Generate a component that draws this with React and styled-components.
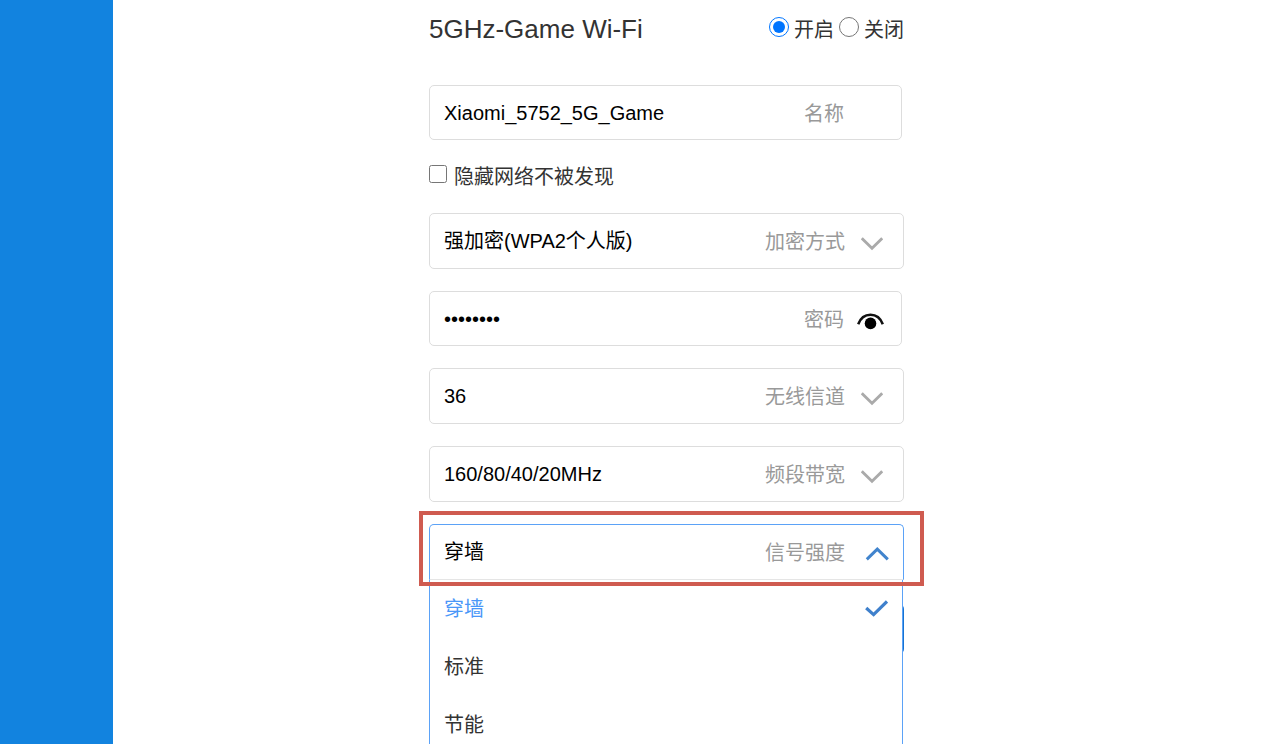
import React, { useState } from "react";
import styled, { createGlobalStyle } from "styled-components";

const GlobalStyle = createGlobalStyle`
  * { box-sizing: border-box; }
  body {
    margin: 0;
    background: #fff;
    color: #333;
    font-family: "Liberation Sans", "Noto Sans CJK SC", sans-serif;
    font-size: 20px;
    line-height: 30px;
  }
  input, select, button { font: inherit; color: inherit; }
`;

const Shell = styled.div`
  display: flex;
  height: 100vh;
`;

const SideBar = styled.aside`
  flex: 0 0 113px;
  background: #1283df;
`;

const Main = styled.main`
  flex: 1;
  min-width: 0;
  overflow-y: auto;
  scrollbar-width: none;
  padding: 14px 24px 130px 316px;
`;

const Form = styled.form`
  display: flex;
  flex-direction: column;
  max-width: 475px;
`;

const Header = styled.div`
  display: flex;
  justify-content: space-between;
  align-items: flex-start;
  margin-bottom: 39px;
`;

const Title = styled.h1`
  margin: 0;
  font-size: 26px;
  font-weight: 400;
  line-height: 30px;
`;

const RadioGroup = styled.div`
  display: flex;
  gap: 5px;
`;

const Choice = styled.label`
  display: flex;
  align-items: flex-start;
  gap: ${(p) => (p.$wide ? 7 : 5)}px;
  line-height: 32px;
`;

const Radio = styled.input`
  width: 20px;
  height: 20px;
  margin: 3px 0 0;
`;

const CheckBox = styled.input`
  width: 18px;
  height: 18px;
  margin: 4px 0 0;
`;

const Fields = styled.div`
  display: flex;
  flex-direction: column;
  gap: 22px;
`;

const HideRow = styled.div`
  margin: -1px 0 -2px;
`;

const Box = styled.div`
  display: flex;
  align-items: center;
  height: ${(p) => (p.$text ? 55 : 56)}px;
  margin-right: ${(p) => (p.$text ? 2 : 0)}px;
  padding: 0 ${(p) => (p.$open ? 14 : p.$text ? 17 : 20)}px 0 14px;
  border: 1px solid ${(p) => (p.$open ? "#5ba2f7" : "#ddd")};
  border-bottom-color: ${(p) => (p.$open ? "#e5e5e5" : "#ddd")};
  border-radius: ${(p) => (p.$open ? "5px 5px 0 0" : "5px")};
  background: #fff;
`;

const TextInput = styled.input`
  flex: 1;
  min-width: 0;
  height: 30px;
  padding: 0;
  border: 0;
  outline: 0;
  background: none;
  color: #000;
`;

const Select = styled.select`
  flex: 1;
  min-width: 0;
  height: 30px;
  padding: 0;
  border: 0;
  outline: 0;
  appearance: none;
  background: none;
  color: #000;
`;

const FieldLabel = styled.label`
  padding-top: 2px;
  color: #999;
`;

const IconSlot = styled.span`
  display: flex;
  justify-content: flex-end;
  width: ${(p) => (p.$open ? 44 : p.$text ? 40 : 38)}px;
  padding-top: ${(p) => (p.$open ? 4 : 6)}px;
`;

const EyeButton = styled.button`
  display: flex;
  padding: 0;
  border: 0;
  background: none;
`;

const SelectArea = styled.div`
  position: relative;
`;

const Menu = styled.ul`
  position: absolute;
  z-index: 1;
  top: 100%;
  left: 0;
  right: 1px;
  margin: 0;
  padding: 0;
  list-style: none;
  background: #fff;
  border: 1px solid #5ba2f7;
  border-top: 0;
`;

const MenuItem = styled.button`
  display: flex;
  align-items: center;
  justify-content: space-between;
  width: 100%;
  height: 58px;
  padding: 0 14px;
  border: 0;
  background: none;
  text-align: left;
  color: ${(p) => (p.$active ? "#4a97f8" : "#333")};
`;

const Highlight = styled.div`
  position: absolute;
  z-index: 2;
  top: -13px;
  left: -10px;
  right: -20px;
  height: 75px;
  border: 4px solid #cf5b50;
  pointer-events: none;
`;

const SubmitButton = styled.button`
  height: 50px;
  margin-top: 24px;
  border: 0;
  border-radius: 5px;
  background: #1673d2;
`;

const ChevronDown = () => (
  <svg width="22" height="14" viewBox="0 0 22 14" fill="none" stroke="#aaa" strokeWidth="2.8">
    <path d="M.8 1.3 11 11.2 21.2 1.3" />
  </svg>
);

const ChevronUp = () => (
  <svg width="24" height="14" viewBox="0 0 24 14" fill="none" stroke="#4184cd" strokeWidth="3">
    <path d="M1.8 12.3 12.3 2.1 22.8 12.3" />
  </svg>
);

const Check = () => (
  <svg width="24" height="18" viewBox="0 0 24 18" fill="none" stroke="#3f80cc" strokeWidth="3.2">
    <path d="M2.2 8 9.6 14.6 23 1.4" />
  </svg>
);

const Eye = () => (
  <svg width="27" height="17" viewBox="0 0 27 17">
    <path d="M1.2 11.2C3.5 5 8 1.7 13.5 1.7S23.5 5 25.8 11.2" fill="none" stroke="#111" strokeWidth="2.6" />
    <circle cx="13.5" cy="10.4" r="5.8" fill="#000" />
  </svg>
);

function SelectField({ id, label, options }) {
  return (
    <Box>
      <Select id={id} defaultValue={options[0]}>
        {options.map((o) => (
          <option key={o}>{o}</option>
        ))}
      </Select>
      <FieldLabel htmlFor={id}>{label}</FieldLabel>
      <IconSlot>
        <ChevronDown />
      </IconSlot>
    </Box>
  );
}

const strengths = ["穿墙", "标准", "节能"];

export default function App() {
  const [strength, setStrength] = useState("穿墙");
  const [open, setOpen] = useState(true);
  const [shown, setShown] = useState(false);

  return (
    <>
      <GlobalStyle />
      <Shell>
        <SideBar />
        <Main>
          <Form onSubmit={(e) => e.preventDefault()}>
            <Header>
              <Title>5GHz-Game Wi-Fi</Title>
              <RadioGroup>
                <Choice>
                  <Radio type="radio" name="wifi" defaultChecked />
                  开启
                </Choice>
                <Choice>
                  <Radio type="radio" name="wifi" />
                  关闭
                </Choice>
              </RadioGroup>
            </Header>
            <Fields>
              <Box $text>
                <TextInput id="ssid" type="text" defaultValue="Xiaomi_5752_5G_Game" />
                <FieldLabel htmlFor="ssid">名称</FieldLabel>
                <IconSlot $text />
              </Box>
              <HideRow>
                <Choice $wide>
                  <CheckBox type="checkbox" />
                  隐藏网络不被发现
                </Choice>
              </HideRow>
              <SelectField id="encryption" label="加密方式" options={["强加密(WPA2个人版)"]} />
              <Box $text>
                <TextInput
                  id="password"
                  type={shown ? "text" : "password"}
                  defaultValue="12345678"
                  autoComplete="off"
                />
                <FieldLabel htmlFor="password">密码</FieldLabel>
                <IconSlot $text>
                  <EyeButton type="button" aria-label="显示密码" onClick={() => setShown(!shown)}>
                    <Eye />
                  </EyeButton>
                </IconSlot>
              </Box>
              <SelectField id="channel" label="无线信道" options={["36"]} />
              <SelectField id="bandwidth" label="频段带宽" options={["160/80/40/20MHz"]} />
              <SelectArea>
                <Box $open={open}>
                  <Select
                    id="strength"
                    value={strength}
                    onChange={(e) => setStrength(e.target.value)}
                    onMouseDown={(e) => {
                      e.preventDefault();
                      setOpen(!open);
                    }}
                  >
                    {strengths.map((s) => (
                      <option key={s}>{s}</option>
                    ))}
                  </Select>
                  <FieldLabel htmlFor="strength">信号强度</FieldLabel>
                  <IconSlot $open={open}>{open ? <ChevronUp /> : <ChevronDown />}</IconSlot>
                </Box>
                {open && (
                  <Menu>
                    {strengths.map((s) => (
                      <li key={s}>
                        <MenuItem
                          type="button"
                          $active={s === strength}
                          onClick={() => {
                            setStrength(s);
                            setOpen(false);
                          }}
                        >
                          {s}
                          {s === strength && <Check />}
                        </MenuItem>
                      </li>
                    ))}
                  </Menu>
                )}
                <Highlight />
              </SelectArea>
            </Fields>
            <SubmitButton type="submit" aria-label="保存" />
          </Form>
        </Main>
      </Shell>
    </>
  );
}
